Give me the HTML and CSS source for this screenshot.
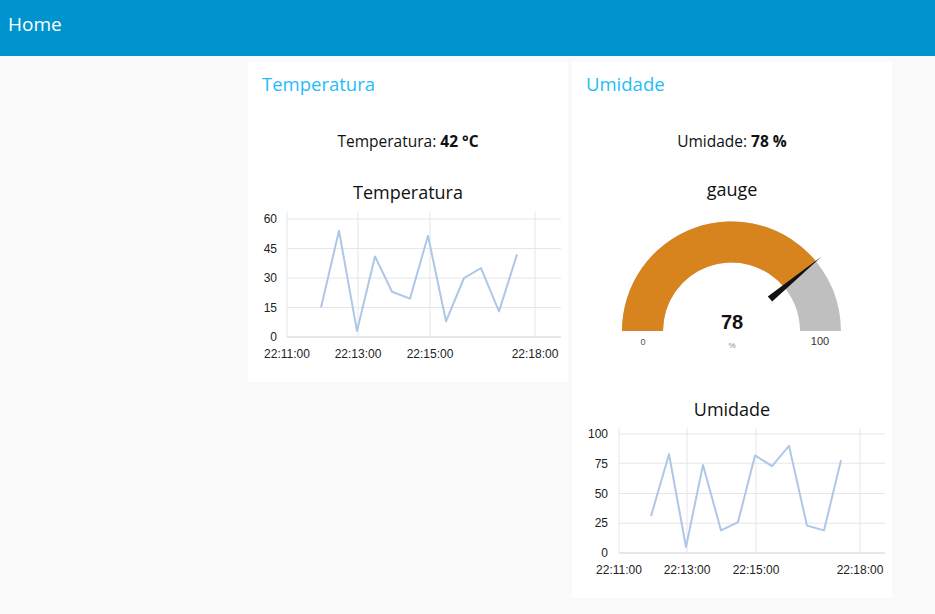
FILE: index.html
```html
<!DOCTYPE html>
<html>
<head>
<meta charset="utf-8">
<title>Home</title>
<link rel="stylesheet" href="styles.css">
</head>
<body>
<header class="toolbar"><span class="toolbar-title">Home</span></header>
<main class="content">
  <section class="card card-temp">
    <h2 class="group-title">Temperatura</h2>
    <div class="text-row">Temperatura: <b>42 °C</b></div>
    <div class="chart-title">Temperatura</div>
    <svg class="chart" width="320" height="169" viewBox="0 0 320 169">
      <g class="grid">
        <line x1="39" y1="12" x2="313" y2="12"/>
        <line x1="39" y1="41.5" x2="313" y2="41.5"/>
        <line x1="39" y1="71" x2="313" y2="71"/>
        <line x1="39" y1="100.5" x2="313" y2="100.5"/>
        <line x1="39" y1="5" x2="39" y2="130"/>
        <line x1="110" y1="5" x2="110" y2="130"/>
        <line x1="182" y1="5" x2="182" y2="130"/>
        <line x1="287" y1="5" x2="287" y2="130"/>
      </g>
      <line class="axis" x1="39" y1="130" x2="313" y2="130"/>
      <g class="ylab">
        <text x="29" y="16">60</text>
        <text x="29" y="45.5">45</text>
        <text x="29" y="75">30</text>
        <text x="29" y="104.5">15</text>
        <text x="29" y="134">0</text>
      </g>
      <g class="xlab">
        <text x="39" y="151">22:11:00</text>
        <text x="110" y="151">22:13:00</text>
        <text x="182" y="151">22:15:00</text>
        <text x="287" y="151">22:18:00</text>
      </g>
      <polyline class="series" points="73,100.5 91,23.8 109,124.1 127,49.4 144,84.8 162,91.6 180,28.7 198,114.3 216,71 233,61.2 251,104.4 269,47.4"/>
    </svg>
  </section>
  <section class="card card-hum">
    <h2 class="group-title">Umidade</h2>
    <div class="text-row">Umidade: <b>78 %</b></div>
    <div class="chart-title gauge-title">gauge</div>
    <svg class="gauge" width="320" height="160" viewBox="0 0 320 160">
      <path fill="#bfbfbf" d="M 50,127 A 109.5 109.5 0 0 1 269,127 L 228,127 A 68.5 68.5 0 0 0 91,127 Z"/>
      <path fill="#d7841f" d="M 50,127 A 109.5 109.5 0 0 1 243.87,57.2 L 212.28,83.34 A 68.5 68.5 0 0 0 91,127 Z"/>
      <polygon fill="#111" points="200.2,97.6 195.8,92.6 249.6,52.4"/>
      <text class="g-val" x="160" y="125">78</text>
      <text class="g-unit" x="160" y="144">%</text>
      <text class="g-min" x="71" y="141">0</text>
      <text class="g-max" x="248" y="141">100</text>
    </svg>
    <div class="chart-title hum-title">Umidade</div>
    <svg class="chart" width="320" height="168" viewBox="0 0 320 168">
      <g class="grid">
        <line x1="47" y1="10" x2="313" y2="10"/>
        <line x1="47" y1="39.25" x2="313" y2="39.25"/>
        <line x1="47" y1="69.5" x2="313" y2="69.5"/>
        <line x1="47" y1="99.25" x2="313" y2="99.25"/>
        <line x1="47" y1="4" x2="47" y2="129"/>
        <line x1="115" y1="4" x2="115" y2="129"/>
        <line x1="184" y1="4" x2="184" y2="129"/>
        <line x1="288" y1="4" x2="288" y2="129"/>
      </g>
      <line class="axis" x1="47" y1="129" x2="313" y2="129"/>
      <g class="ylab">
        <text x="36" y="14">100</text>
        <text x="36" y="43.5">75</text>
        <text x="36" y="73.5">50</text>
        <text x="36" y="103">25</text>
        <text x="36" y="133">0</text>
      </g>
      <g class="xlab">
        <text x="47" y="150">22:11:00</text>
        <text x="115" y="150">22:13:00</text>
        <text x="184" y="150">22:15:00</text>
        <text x="288" y="150">22:18:00</text>
      </g>
      <polyline class="series" points="79,92.1 97,30.2 114,123 131,40.9 149,106.4 166,98.1 183,31.4 200,42.1 217,21.9 235,101.6 252,106.4 269,36.2"/>
    </svg>
  </section>
</main>
</body>
</html>
```
FILE: styles.css
```css
html, body {
  margin: 0;
  padding: 0;
  background: #fafafa;
  font-family: "Open Sans", "Noto Sans", sans-serif;
  color: #111;
}
.toolbar {
  height: 56px;
  background: #0094ce;
  display: flex;
  align-items: center;
  padding-left: 8px;
}
.toolbar-title {
  color: #fff;
  font-size: 19px;
  font-weight: 400;
  margin-top: -8px;
}
.content {
  display: flex;
  align-items: flex-start;
  gap: 4px;
  padding: 6px 0 0 248px;
}
.card {
  width: 320px;
  background: #fff;
  display: flex;
  flex-direction: column;
}
.card-temp { height: 320px; }
.card-hum { height: 536px; }
.group-title {
  margin: 0;
  height: 44px;
  line-height: 44px;
  padding-left: 14px;
  font-size: 18.5px;
  font-weight: 400;
  color: #1fbcfc;
}
.text-row {
  margin-top: 11px;
  height: 48px;
  line-height: 48px;
  text-align: center;
  font-size: 15.5px;
}
.text-row b { font-weight: 700; }
.chart-title {
  margin-top: 12px;
  height: 30px;
  line-height: 30px;
  text-align: center;
  font-size: 18px;
}
.gauge-title { margin-top: 9px; }
.hum-title { margin-top: 30px; }
.chart, .gauge { display: block; }
.grid line { stroke: #e6e6e6; stroke-width: 1; }
.axis { stroke: #d0d0d0; stroke-width: 1; }
.ylab text {
  font-family: "Liberation Sans", Arial, sans-serif;
  font-size: 12px;
  fill: #222;
  text-anchor: end;
}
.xlab text {
  font-family: "Liberation Sans", Arial, sans-serif;
  font-size: 12px;
  fill: #222;
  text-anchor: middle;
}
.series {
  fill: none;
  stroke: #aec7e8;
  stroke-width: 2;
  stroke-linejoin: round;
}
.gauge text {
  font-family: "Liberation Sans", Arial, sans-serif;
  text-anchor: middle;
}
.g-val { font-size: 20px; font-weight: 700; fill: #111; }
.g-unit { font-size: 8px; fill: #888; }
.g-min { font-size: 9px; fill: #555; }
.g-max { font-size: 11px; fill: #333; }
```
